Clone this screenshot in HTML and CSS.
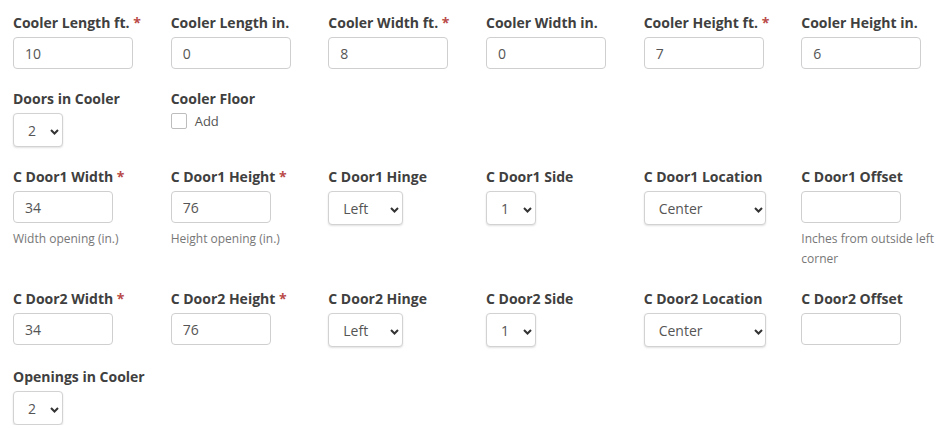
FILE: index.html
```html
<!DOCTYPE html>
<html>
<head>
<meta charset="utf-8">
<link rel="stylesheet" href="styles.css">
</head>
<body>
<form class="form">
  <div class="row">
    <div class="field"><label class="lbl">Cooler Length ft. <span class="req">*</span></label><input class="txt wide" type="text" value="10"></div>
    <div class="field"><label class="lbl">Cooler Length in.</label><input class="txt wide" type="text" value="0"></div>
    <div class="field"><label class="lbl">Cooler Width ft. <span class="req">*</span></label><input class="txt wide" type="text" value="8"></div>
    <div class="field"><label class="lbl">Cooler Width in.</label><input class="txt wide" type="text" value="0"></div>
    <div class="field"><label class="lbl">Cooler Height ft. <span class="req">*</span></label><input class="txt wide" type="text" value="7"></div>
    <div class="field"><label class="lbl">Cooler Height in.</label><input class="txt wide" type="text" value="6"></div>
  </div>
  <div class="row">
    <div class="field"><label class="lbl">Doors in Cooler</label><select class="sel num"><option>2</option></select></div>
    <div class="field"><label class="lbl">Cooler Floor</label>
      <label class="check"><span class="box"></span><span class="check-text">Add</span></label>
    </div>
  </div>
  <div class="row">
    <div class="field"><label class="lbl">C Door1 Width <span class="req">*</span></label><input class="txt short" type="text" value="34"><p class="help">Width opening (in.)</p></div>
    <div class="field"><label class="lbl">C Door1 Height <span class="req">*</span></label><input class="txt short" type="text" value="76"><p class="help">Height opening (in.)</p></div>
    <div class="field"><label class="lbl">C Door1 Hinge</label><select class="sel hinge"><option>Left</option></select></div>
    <div class="field"><label class="lbl">C Door1 Side</label><select class="sel num"><option>1</option></select></div>
    <div class="field"><label class="lbl">C Door1 Location</label><select class="sel loc"><option>Center</option></select></div>
    <div class="field"><label class="lbl">C Door1 Offset</label><input class="txt short" type="text" value=""><p class="help">Inches from outside left corner</p></div>
  </div>
  <div class="row">
    <div class="field"><label class="lbl">C Door2 Width <span class="req">*</span></label><input class="txt short" type="text" value="34"></div>
    <div class="field"><label class="lbl">C Door2 Height <span class="req">*</span></label><input class="txt short" type="text" value="76"></div>
    <div class="field"><label class="lbl">C Door2 Hinge</label><select class="sel hinge"><option>Left</option></select></div>
    <div class="field"><label class="lbl">C Door2 Side</label><select class="sel num"><option>1</option></select></div>
    <div class="field"><label class="lbl">C Door2 Location</label><select class="sel loc"><option>Center</option></select></div>
    <div class="field"><label class="lbl">C Door2 Offset</label><input class="txt short" type="text" value=""></div>
  </div>
  <div class="row">
    <div class="field"><label class="lbl">Openings in Cooler</label><select class="sel num"><option>2</option></select></div>
  </div>
</form>
</body>
</html>
```

FILE: styles.css
```css
html, body {
  margin: 0;
  padding: 0;
  background: #fff;
  overflow: hidden;
}
body {
  font-family: "Open Sans", "DejaVu Sans", sans-serif;
  color: #444;
}
.form {
  padding: 13px 0 0 13px;
  display: flex;
  flex-direction: column;
  gap: 20px;
}
.row {
  display: grid;
  grid-template-columns: repeat(6, 157.67px);
  align-items: start;
}
.field {
  display: flex;
  flex-direction: column;
  align-items: flex-start;
  min-width: 0;
}
.lbl {
  font-size: 14px;
  font-weight: 700;
  line-height: 20px;
  color: #404040;
  margin-bottom: 4px;
  white-space: nowrap;
}
.req {
  color: #b94a48;
}
.txt {
  box-sizing: border-box;
  height: 32px;
  border: 1px solid #cfcfcf;
  border-radius: 4px;
  padding: 0 11px;
  font-family: "Open Sans", sans-serif;
  font-size: 14px;
  color: #555;
  background: #fff;
  outline: none;
  margin: 0;
}
.wide { width: 120px; }
.short { width: 100px; }
.sel {
  box-sizing: border-box;
  height: 34px;
  border: 1px solid #d2d2d2;
  border-radius: 4px;
  box-shadow: 0 1px 2px rgba(0,0,0,0.12);
  -webkit-appearance: none;
  appearance: none;
  background: #fff url("data:image/svg+xml;utf8,<svg xmlns='http://www.w3.org/2000/svg' width='9' height='6' viewBox='0 0 9 6'><path d='M1 1 L4.5 4.5 L8 1' fill='none' stroke='%23333' stroke-width='2'/></svg>") no-repeat;
  font-family: "Open Sans", sans-serif;
  font-size: 14px;
  color: #555;
  padding: 0 0 0 14px;
  margin: 0;
  outline: none;
}
.num { width: 50px; background-position: 36px 15px; }
.hinge { width: 75px; background-position: 61px 15px; }
.loc { width: 122px; background-position: 109px 15px; }
.check {
  display: flex;
  align-items: flex-start;
  gap: 8px;
  font-size: 13px;
  color: #555;
  line-height: 16px;
}
.box {
  box-sizing: border-box;
  width: 16px;
  height: 16px;
  border: 1px solid #bdbdbd;
  border-radius: 2px;
  background: #fff;
}
.help {
  margin: 6px 0 0;
  font-size: 12px;
  line-height: 20px;
  color: #777;
  max-width: 145px;
}
```
